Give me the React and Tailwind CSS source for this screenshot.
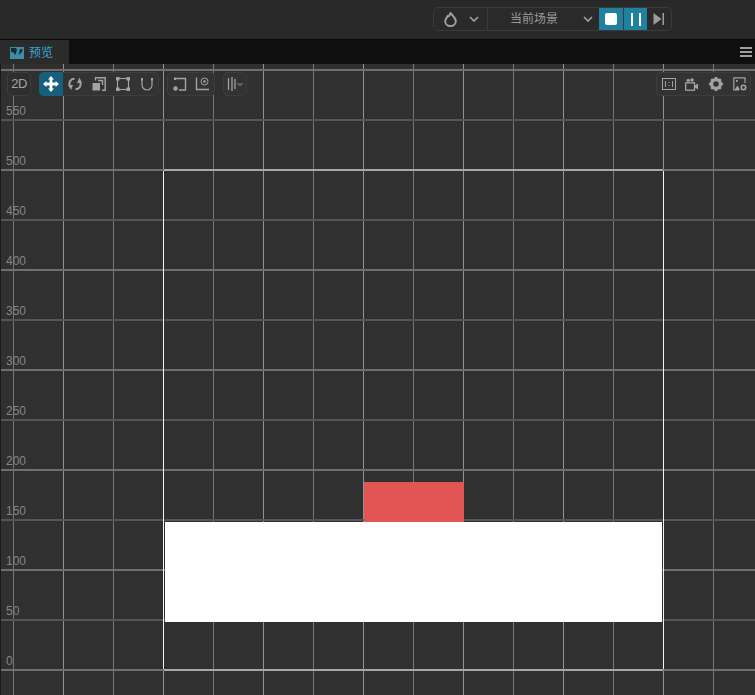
const FONT = "font-['Liberation_Sans','Noto_Sans_CJK_SC',sans-serif]";

const xLines = [13, 63, 113, 163, 213, 263, 313, 363, 413, 463, 513, 563, 613, 663, 713];
const yLines = [70, 120, 170, 220, 270, 320, 370, 420, 470, 520, 570, 620, 670];
const labels = [550, 500, 450, 400, 350, 300, 250, 200, 150, 100, 50, 0];

// canvas starts at y=64, so everything in it is offset by that
function Grid() {
  return (
    <>
      {xLines.map((x, i) => (
        <div
          key={x}
          className={i % 2 === 1 ? 'absolute top-0 bottom-0 w-px bg-[#929292]' : 'absolute top-0 bottom-0 w-px bg-[#767676]'}
          style={{ left: x }}
        />
      ))}
      {yLines.map((y, i) => (
        <div
          key={y}
          className={i % 2 === 0 ? 'absolute left-[1px] right-0 h-[2px] bg-[#707070]' : 'absolute left-[1px] right-0 h-[2px] bg-[#555555]'}
          style={{ top: y - 65 }}
        />
      ))}
      {labels.map((n, i) => (
        <span key={n} className="absolute left-[6px] text-[12px] leading-[14px] text-[#858585]" style={{ top: 40 + i * 50 }}>
          {n}
        </span>
      ))}
    </>
  );
}

function Scene() {
  return (
    <>
      <div className="absolute left-[164px] top-[105px] h-[2px] w-[499px] bg-[#a8a8a8]" />
      <div className="absolute left-[164px] top-[605px] h-[2px] w-[499px] bg-[#a8a8a8]" />
      <div className="absolute left-[163px] top-[107px] h-[498px] w-px bg-[#f4f4f4]" />
      <div className="absolute left-[663px] top-[107px] h-[498px] w-px bg-[#f4f4f4]" />
      <div className="absolute left-[364px] top-[418px] h-[40px] w-[100px] bg-[#e25555]" />
      <div className="absolute left-[165px] top-[458px] h-[100px] w-[497px] bg-white" />
    </>
  );
}

function Icon({ children }) {
  return (
    <svg viewBox="0 0 14 14" className="h-[14px] w-[14px]" fill="none" stroke="#a3a3a3" strokeWidth="1.4">
      {children}
    </svg>
  );
}

function ToolBtn({ children, active }) {
  return (
    <div className={active ? 'flex h-[24px] w-[24px] items-center justify-center bg-[#15607c] rounded-l-[5px]' : 'flex h-[24px] w-[24px] items-center justify-center'}>
      {children}
    </div>
  );
}

function Toolbar() {
  return (
    <div className="absolute left-[7px] right-[4px] top-[8px] flex items-start">
      <div className="flex h-[24px] w-[24px] items-center justify-center rounded-[5px] border border-[#3d3d3d] bg-[#2e2e2e] text-[13px] tracking-[-0.5px] text-[#a3a3a3]">
        2D
      </div>
      <div className="ml-[8px] flex h-[24px] w-[120px] rounded-[5px] bg-[#333333] ring-1 ring-inset ring-[#3d3d3d]">
        <ToolBtn active>
          <svg viewBox="0 0 16 16" className="h-[16px] w-[16px]" fill="#ffffff">
            <path d="M8 0 L11 3.4 H9.4 V6.6 H12.6 V5 L16 8 L12.6 11 V9.4 H9.4 V12.6 H11 L8 16 L5 12.6 H6.6 V9.4 H3.4 V11 L0 8 L3.4 5 V6.6 H6.6 V3.4 H5 Z" />
          </svg>
        </ToolBtn>
        <ToolBtn>
          <Icon>
            <path d="M6.5 1.8 C3 1.8 0.8 4.5 1.6 8.5" strokeWidth="2" />
            <path d="M7.5 12.2 C11 12.2 13.2 9.5 12.4 5.5" strokeWidth="2" />
            <path d="M0 8 H5 L3 13 Z M9 6 H14 L11.5 0.5 Z" fill="#a3a3a3" stroke="none" />
          </Icon>
        </ToolBtn>
        <ToolBtn>
          <Icon>
            <path d="M3.5 3.5 V0.8 H13.2 V13.2 H10" />
            <path d="M6 3.5 H10.5 V8" />
            <rect x="0.5" y="6" width="7.5" height="7.5" fill="#a3a3a3" stroke="none" />
          </Icon>
        </ToolBtn>
        <ToolBtn>
          <Icon>
            <rect x="1.5" y="1.5" width="11" height="11" strokeWidth="1.1" />
            <path d="M0 0 H3.5 V3.5 H0 Z M10.5 0 H14 V3.5 H10.5 Z M0 10.5 H3.5 V14 H0 Z M10.5 10.5 H14 V14 H10.5 Z" fill="#a3a3a3" stroke="none" />
          </Icon>
        </ToolBtn>
        <ToolBtn>
          <Icon>
            <path d="M2 1 V8 A5 5 0 0 0 12 8 V1" strokeWidth="1.2" />
            <path d="M2 1 V3.5 M12 1 V3.5" strokeWidth="2" />
          </Icon>
        </ToolBtn>
      </div>
      <div className="ml-[8px] flex h-[24px] w-[48px] items-center justify-around rounded-[5px] bg-[#333333] px-[2px] ring-1 ring-inset ring-[#3d3d3d]">
        <Icon>
          <path d="M3.5 1.5 H12.5 V13 H6" strokeWidth="1.4" />
          <circle cx="2.5" cy="11.5" r="2.2" fill="#a3a3a3" stroke="none" />
          <rect x="1" y="0.5" width="2.5" height="2.5" fill="#a3a3a3" stroke="none" />
        </Icon>
        <Icon>
          <path d="M1.5 0.5 V12.5 H14" strokeWidth="1.4" />
          <circle cx="9.5" cy="4.5" r="3.5" strokeWidth="1" />
          <circle cx="9.5" cy="4.5" r="1.3" fill="#a3a3a3" stroke="none" />
        </Icon>
      </div>
      <div className="ml-[8px] flex h-[24px] w-[24px] items-center justify-center rounded-[5px] border border-[#3d3d3d] bg-[#333333]">
        <svg viewBox="0 0 20 16" className="h-[16px] w-[20px]" fill="none" stroke="#a3a3a3">
          <path d="M3.5 2 V14 M7 1 V15 M10 3 V13" strokeWidth="1.3" />
          <path d="M12.5 7 L15 9.5 L17.5 7" strokeWidth="1" />
        </svg>
      </div>
      <div className="ml-auto flex h-[24px] w-[95px] items-center rounded-[5px] bg-[#333333] pl-[6px] ring-1 ring-inset ring-[#3d3d3d]">
        <svg viewBox="0 0 14 12" className="h-[12px] w-[14px]" fill="none" stroke="#a3a3a3">
          <rect x="0.5" y="0.5" width="13" height="11" />
          <path d="M3.5 3 V9 M10.5 3 V9 M7 4 V5 M7 7 V8" />
        </svg>
        <svg viewBox="0 0 13 13" className="ml-[9px] h-[13px] w-[13px]" fill="none" stroke="#a3a3a3" strokeWidth="1.3">
          <rect x="0.7" y="4.8" width="8.8" height="7.4" />
          <path d="M10 7.5 L13 5.5 V11.5 L10 9.5 Z" fill="#a3a3a3" stroke="none" />
          <circle cx="3.2" cy="2.3" r="1.6" fill="#a3a3a3" stroke="none" />
          <circle cx="7" cy="2" r="1.8" fill="#a3a3a3" stroke="none" />
        </svg>
        <svg viewBox="0 0 14 14" className="ml-[11px] h-[14px] w-[14px]" fill="none" stroke="#a3a3a3">
          <circle cx="7" cy="7" r="4.4" strokeWidth="3.2" />
          <path d="M7 0 V3 M7 11 V14 M0 7 H3 M11 7 H14 M2.2 2.2 L4 4 M10 10 L11.8 11.8 M11.8 2.2 L10 4 M2.2 11.8 L4 10" strokeWidth="2.6" />
        </svg>
        <svg viewBox="0 0 14 14" className="ml-[10px] h-[14px] w-[14px]" fill="none" stroke="#a3a3a3" strokeWidth="1.2">
          <path d="M6 13 H0.8 V0.8 H12 V6" />
          <path d="M1.5 13 L4.5 8.5 L7 13 Z" fill="#a3a3a3" stroke="none" />
          <rect x="3" y="3" width="1.8" height="1.8" fill="#a3a3a3" stroke="none" />
          <circle cx="10.5" cy="10.5" r="2.2" strokeWidth="1.6" />
        </svg>
      </div>
    </div>
  );
}

function Chevron({ className }) {
  return (
    <svg viewBox="0 0 10 6" className={className} fill="none" stroke="#a3a3a3" strokeWidth="1.6">
      <path d="M1 1 L5 5 L9 1" />
    </svg>
  );
}

function TopBar() {
  return (
    <div className="flex h-[39px] items-start justify-end bg-[#292929] pr-[83px] pt-[7px]">
      <div className="flex h-[24px] w-[239px] items-stretch rounded-[5px] border border-[#3a3a3a] bg-[#2a2a2a]">
        <div className="flex w-[54px] items-center border-r border-[#3a3a3a] pl-[10px]">
          <svg viewBox="0 0 13 16" className="h-[16px] w-[13px]" fill="none" stroke="#a3a3a3" strokeWidth="1.9">
            <path d="M6.5 1.5 C7 4 11.8 6.5 11.8 10.3 A5.3 4.8 0 0 1 1.2 10.3 C1.2 8 3 7 3.5 5.2 C4.5 6 6 4 6.5 1.5 Z" />
          </svg>
          <Chevron className="ml-[12px] h-[6px] w-[10px]" />
        </div>
        <div className="flex w-[111px] items-center pl-[22px] pr-[6px] text-[12px] text-[#9a9a9a]">
          <span>当前场景</span>
          <Chevron className="ml-auto h-[6px] w-[10px]" />
        </div>
        <div className="flex w-[24px] items-center justify-center bg-[#20809f]">
          <div className="h-[12px] w-[12px] rounded-[2px] bg-white" />
        </div>
        <div className="flex w-[24px] items-center justify-center gap-[6px] border-l border-[#3a3a3a] bg-[#20809f]">
          <div className="h-[13px] w-[2px] bg-white" />
          <div className="h-[13px] w-[2px] bg-white" />
        </div>
        <div className="flex flex-1 items-center justify-center">
          <svg viewBox="0 0 12 12" className="h-[12px] w-[12px]" fill="#9c9c9c">
            <path d="M0.5 0 L8.5 6 L0.5 12 Z" />
            <rect x="9.5" y="0" width="1.5" height="12" />
          </svg>
        </div>
      </div>
    </div>
  );
}

function TabBar() {
  return (
    <div className="flex h-[25px] border-t border-[#0a0a0a] bg-[#0f0f0f]">
      <div className="flex h-[25px] w-[69px] items-center bg-[#2b2b2b] pl-[10px] text-[12px] text-[#36a6d6]">
        <svg viewBox="0 0 14 12" className="h-[12px] w-[14px]">
          <rect width="14" height="12" fill="#3b8ea8" />
          <path d="M1 1 H6 L7 3 L5.5 8 L3.5 5.5 L1 5 Z" fill="#1c2a30" />
          <path d="M10 2 H12.5 L12 5 L8.5 8 Z" fill="#1c2a30" />
        </svg>
        <span className="ml-[5px]">预览</span>
      </div>
      <div className="ml-auto flex flex-col gap-[2px] pr-[3px] pt-[7px]">
        <div className="h-[2px] w-[12px] bg-[#a0a0a0]" />
        <div className="h-[2px] w-[12px] bg-[#a0a0a0]" />
        <div className="h-[2px] w-[12px] bg-[#a0a0a0]" />
      </div>
    </div>
  );
}

export default function App() {
  return (
    <div className={`${FONT} flex h-[695px] w-[755px] flex-col overflow-hidden bg-[#292929]`}>
      <TopBar />
      <TabBar />
      <div className="relative flex-1 overflow-hidden bg-[#303030]">
        <div className="absolute bottom-0 left-0 top-0 w-px bg-[#1a1a1a]" />
        <Grid />
        <Scene />
        <Toolbar />
      </div>
    </div>
  );
}
